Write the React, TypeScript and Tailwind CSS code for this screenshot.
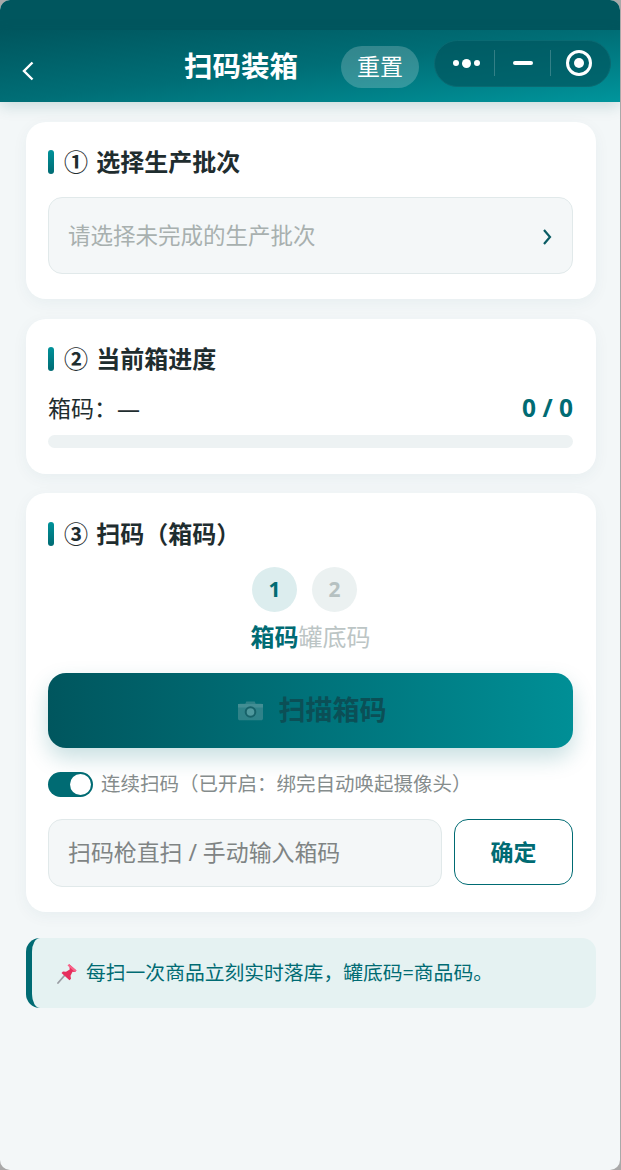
const FONT = "font-['Noto_Sans','Noto_Sans_CJK_SC',sans-serif]";

function SectionTitle({ children }: { children: string }) {
  return (
    <div className="flex h-[26px] items-center gap-[10px]">
      <span className="h-6 w-[6px] rounded-[3px] bg-gradient-to-b from-[#00929a] to-[#006b73]" />
      <h2 className="text-[24px] leading-[26px] font-bold whitespace-nowrap text-[#1f2d2f] [word-spacing:2px]">{children}</h2>
    </div>
  );
}

function CameraIcon() {
  return (
    <svg width="27" height="21" viewBox="0 0 27 21" className="opacity-75">
      <path d="M1 5.500c0-1 .8-1.800 1.800-1.800h5.500l1-2.200h8.400l1 2.200h5.500c1 0 1.800.8 1.800 1.800v13c0 1-.8 1.800-1.800 1.800H2.800c-1 0-1.800-.8-1.800-1.800z" fill="#3f8a90" />
      <rect x="1" y="4" width="25" height="3.500" fill="#5a9a9f" />
      <circle cx="13.500" cy="12" r="5.800" fill="#1f5f66" />
      <circle cx="13.500" cy="12" r="3.800" fill="#6aa7ab" />
    </svg>
  );
}

function PinIcon() {
  return (
    <svg width="20" height="21" viewBox="0 0 20 21">
      <path d="M1 20 7.500 12.500" stroke="#9a9da3" strokeWidth="1.800" strokeLinecap="round" />
      <path d="M12 1 19.500 7.500l-1.500 1.500-2.500-.2-2 4 .5 3-1.500 1.500-8-7.300 1.500-1.500 3 .3 3.700-2.300-.2-2.500z" fill="#e62e5c" />
      <path d="M12 1 19.500 7.500l-1.500 1.500-7.500-6.500z" fill="#f8648a" />
    </svg>
  );
}

export default function App() {
  return (
    <div className={`${FONT} h-[1170px] w-[621px] bg-[#a9a9a9]`}>
      <div className="flex h-[1170px] w-[620px] flex-col overflow-hidden rounded-[10px] bg-[#f3f7f8]">
        <div className="h-[30px] bg-[#00565e]" />
        <header className="relative z-10 flex h-[72px] items-center bg-gradient-to-br from-[#00565e] via-[#006e76] to-[#00959c] shadow-[0_4px_14px_rgba(0,90,96,0.18)]">
          <svg width="12" height="20" viewBox="0 0 12 20" className="mt-[10px] ml-[22px]">
            <path d="M10.500 1.500 2 10l8.500 8.500" fill="none" stroke="#fff" strokeWidth="2.400" />
          </svg>
          <h1 className="mt-[-1px] ml-[150px] w-[114px] text-[28.500px] leading-[36px] font-bold whitespace-nowrap text-white">扫码装箱</h1>
          <button className="mt-[1px] ml-[43px] h-[42px] w-[78px] rounded-full bg-white/20 text-[23px] text-white">重置</button>
          <div className="mt-[-6px] ml-[15px] flex h-[47px] w-[177px] shrink-0 items-center rounded-full border border-[#0a6a72] bg-[#00565e]/70">
            <div className="flex w-[59px] items-center justify-center gap-[3px] pl-1">
              <span className="size-[6px] rounded-full bg-white" />
              <span className="size-[9px] rounded-full bg-white" />
              <span className="size-[6px] rounded-full bg-white" />
            </div>
            <span className="h-[26px] w-px bg-white/20" />
            <div className="flex w-[55px] justify-center">
              <span className="h-1 w-[20px] rounded-full bg-white" />
            </div>
            <span className="h-[26px] w-px bg-white/20" />
            <div className="flex flex-1 justify-center pr-1">
              <span className="flex size-[26px] items-center justify-center rounded-full border-[3px] border-white">
                <span className="size-[10px] rounded-full bg-white" />
              </span>
            </div>
          </div>
        </header>

        <main className="flex flex-col pt-5 pr-[24px] pl-[26px]">
          <section className="h-[177px] rounded-[20px] bg-white pt-[27px] pr-[23px] pl-[22px] shadow-[0_4px_16px_rgba(0,80,90,0.05)]">
            <SectionTitle>① 选择生产批次</SectionTitle>
            <div className="mt-[22px] flex h-[77px] items-center justify-between rounded-[14px] border border-[#e1e9ea] bg-[#f4f7f8] pr-[20px] pl-[19px]">
              <span className="text-[22.500px] text-[#a8b0af]">请选择未完成的生产批次</span>
              <svg width="10" height="18" viewBox="0 0 10 18" className="mt-[3px]">
                <path d="M2 2 8 9 2 16" fill="none" stroke="#0a5c64" strokeWidth="2.200" />
              </svg>
            </div>
          </section>

          <section className="mt-5 h-[155px] rounded-[20px] bg-white pt-[27px] pr-[23px] pl-[22px] shadow-[0_4px_16px_rgba(0,80,90,0.05)]">
            <SectionTitle>② 当前箱进度</SectionTitle>
            <div className="mt-[19px] flex h-[34px] items-center justify-between">
              <span className="text-[23px] text-[#1f2d2f]">箱码：—</span>
              <span className="text-[24.500px] font-bold text-[#006b73]">0 / 0</span>
            </div>
            <div className="mt-[10px] h-[13px] rounded-full bg-[#edf2f3]" />
          </section>

          <section className="mt-[19px] h-[419px] rounded-[20px] bg-white pt-[28px] pr-[23px] pl-[22px] shadow-[0_4px_16px_rgba(0,80,90,0.05)]">
            <SectionTitle>③ 扫码（箱码）</SectionTitle>
            <div className="mt-[20px] flex justify-center gap-[15px] pr-[12px]">
              <span className="flex size-[45px] items-center justify-center rounded-full bg-[#dcedee] text-[21px] font-bold text-[#006b73]">1</span>
              <span className="flex size-[45px] items-center justify-center rounded-full bg-[#ebf1f1] text-[21px] font-bold text-[#b6c1c1]">2</span>
            </div>
            <div className="mt-[8px] flex h-[33px] items-center justify-center text-[24px]">
              <span className="font-bold text-[#006b73]">箱码</span>
              <span className="text-[#bcc5c5]">罐底码</span>
            </div>
            <button className="mt-[20px] flex h-[75px] w-full items-center justify-center gap-[15px] rounded-[18px] bg-gradient-to-r from-[#00565e] to-[#008f96] pl-[2px] shadow-[0_10px_22px_rgba(0,110,118,0.22)]">
              <CameraIcon />
              <span className="text-[27px] font-bold text-[#0b4f56]">扫描箱码</span>
            </button>
            <div className="mt-[24px] flex h-6 items-center gap-2">
              <span className="flex h-[25px] w-[45px] items-center justify-end rounded-full bg-[#006b73] pr-[2px]">
                <span className="size-[21px] rounded-full bg-white" />
              </span>
              <span className="text-[19.500px] whitespace-nowrap text-[#858c8c]">连续扫码（已开启：绑完自动唤起摄像头）</span>
            </div>
            <div className="mt-[23px] flex gap-3">
              <div className="flex h-[68px] w-[394px] items-center rounded-[14px] border border-[#e1e9ea] bg-[#f4f7f8] pr-[20px] pb-[-1px] pl-[19px] text-[22.900px] whitespace-nowrap text-[#7f8484]">扫码枪直扫 / 手动输入箱码</div>
              <button className="h-[66px] w-[119px] rounded-[14px] border border-[#006b73] bg-white text-[23px] font-bold text-[#006b73]">确定</button>
            </div>
          </section>

          <aside className="mt-[26px] flex h-[70px] items-center gap-[9px] rounded-[14px] border-l-[6px] border-[#006b73] bg-[#e5f2f2] pl-[25px]">
            <PinIcon />
            <p className="text-[19.800px] whitespace-nowrap text-[#006b73]">每扫一次商品立刻实时落库，罐底码=商品码。</p>
          </aside>
        </main>
      </div>
    </div>
  );
}
